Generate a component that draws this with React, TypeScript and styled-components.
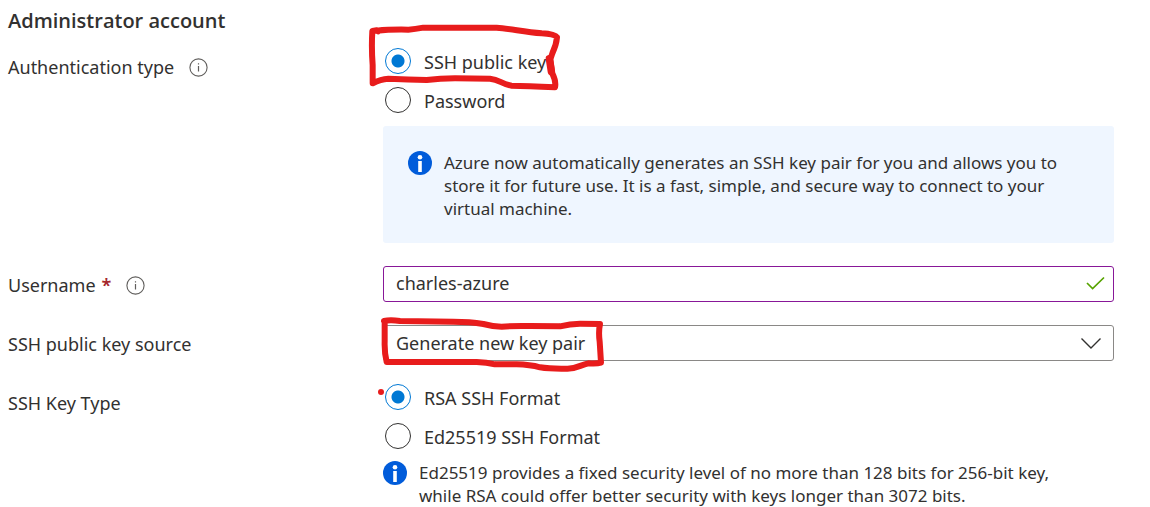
import React from "react";
import styled, { createGlobalStyle } from "styled-components";

const GlobalStyle = createGlobalStyle`
  *, *::before, *::after { box-sizing: border-box; }
  body {
    margin: 0;
    background: #fff;
    color: #323130;
    font-family: "Segoe UI", "Noto Sans", "Open Sans", sans-serif;
    font-size: 18px;
    line-height: 26px;
  }
`;

const Form = styled.form`
  padding: 0 36px 0 8px;
`;

const Heading = styled.h2`
  margin: 0;
  padding: 8px 0 14px;
  font-family: "Segoe UI", "Open Sans", "Noto Sans", sans-serif;
  font-size: 20px;
  line-height: 26px;
  font-weight: 600;
`;

const Rows = styled.div`
  display: grid;
  gap: 23px;
`;

const Row = styled.div`
  display: grid;
  grid-template-columns: 375px minmax(0, 1fr);
`;

const Caption = styled.div`
  display: flex;
  align-items: center;
  height: 36px;
  padding-top: 2px;
`;

const Required = styled.span`
  margin-left: 6px;
  color: #a4262c;
  font-weight: 600;
`;

const InfoButton = styled.button`
  display: flex;
  margin: 0 0 0 15px;
  padding: 0;
  border: 0;
  background: none;
`;

const Control = styled.div`
  position: relative;
  min-width: 0;
`;

const Choices = styled.div`
  display: grid;
  gap: 13px;
`;

const Choice = styled.label`
  display: flex;
  align-items: center;
  gap: 13px;
  height: 26px;
  padding-left: 2px;
`;

const ChoiceText = styled.span`
  padding-top: 2px;
`;

const Radio = styled.input`
  appearance: none;
  width: 26px;
  height: 26px;
  margin: 0;
  border: 1px solid #323130;
  border-radius: 50%;
  background: #fff;

  &:checked {
    border-color: #0078d4;
    background: radial-gradient(circle, #0078d4 6px, #fff 7px);
  }
`;

const Notice = styled.div<{ $filled?: boolean }>`
  display: flex;
  gap: 12px;
  margin-top: ${(p) => (p.$filled ? "13px" : "12px")};
  padding: ${(p) => (p.$filled ? "25px 48px 23px 25px" : "0 48px 0 0")};
  border-radius: 3px;
  background: ${(p) => (p.$filled ? "#eff6ff" : "none")};
  font-size: 17px;
  line-height: 23px;

  svg { flex: none; }
`;

const NoticeText = styled.p`
  margin: 0;
`;

const fieldStyle = `
  display: block;
  width: 100%;
  height: 36px;
  margin: 0;
  border-radius: 3px;
  background: #fff;
  color: #323130;
  font: inherit;
  outline: none;
`;

const TextInput = styled.input`
  ${fieldStyle}
  padding: 0 48px 2px 12px;
  border: 1px solid #881798;
`;

const Select = styled.select`
  ${fieldStyle}
  padding: 0 48px 0 12px;
  appearance: none;
  border: 1px solid #8a8886;
`;

const FieldIcon = styled.svg`
  position: absolute;
  top: 8px;
  right: 8px;
  pointer-events: none;
`;

const Ink = styled.svg<{ $left: number; $top: number }>`
  position: absolute;
  left: ${(p) => p.$left}px;
  top: ${(p) => p.$top}px;
  overflow: visible;
  pointer-events: none;
  fill: none;
  stroke: #e81c1c;
  stroke-width: 18;
  stroke-linecap: round;
  stroke-linejoin: round;
`;

function InfoHint({ label }: { label: string }) {
  return (
    <InfoButton type="button" aria-label={label}>
      <svg width="19" height="19" viewBox="0 0 19 19" fill="none" stroke="#605e5c">
        <circle cx="9.5" cy="9.5" r="8.6" strokeWidth="1.1" />
        <path d="M9.5 8v5.5M9.5 5.2v1.3" strokeWidth="1.2" />
      </svg>
    </InfoButton>
  );
}

function InfoBadge() {
  return (
    <svg width="24" height="24" viewBox="0 0 24 24" aria-hidden="true">
      <circle cx="12" cy="12" r="12" fill="#015cda" />
      <circle cx="12" cy="6.2" r="2.3" fill="#fff" />
      <path d="M10.2 10h3.6v11h-3.6z" fill="#fff" />
    </svg>
  );
}

export default function App() {
  return (
    <>
      <GlobalStyle />
      <Form>
        <Heading>Administrator account</Heading>
        <Rows>
          <Row role="radiogroup" aria-labelledby="auth-type">
            <Caption>
              <span id="auth-type">Authentication type</span>
              <InfoHint label="About authentication type" />
            </Caption>
            <Control>
              <Choices>
                <Choice>
                  <Radio type="radio" name="auth" defaultChecked />
                  <ChoiceText>SSH public key</ChoiceText>
                </Choice>
                <Choice>
                  <Radio type="radio" name="auth" />
                  <ChoiceText>Password</ChoiceText>
                </Choice>
              </Choices>
              <Notice $filled>
                <InfoBadge />
                <NoticeText>
                  Azure now automatically generates an SSH key pair for you and allows you to
                  <br />
                  store it for future use. It is a fast, simple, and secure way to connect to your
                  <br />
                  virtual machine.
                </NoticeText>
              </Notice>
              <Ink $left={-23} $top={-33} width="210" height="105" viewBox="0 0 630 315" aria-hidden="true">
                <path d="M54 49L50 46L37 48Q34 100 38 150L38 205Q62 192 85 191Q145 194 200 195Q240 190 285 190L390 191C420 194 425 208 455 212Q500 213 585 217Q589 200 577 175L571 133L577 115Q589 90 591 67Q584 57 545 55C490 50 450 41 410 38L190 38Q165 43 145 44Q90 43 50 47" />
                <path d="M568 131L574 170" strokeWidth="22" />
              </Ink>
            </Control>
          </Row>

          <Row>
            <Caption>
              <label htmlFor="username">Username</label>
              <Required>*</Required>
              <InfoHint label="About username" />
            </Caption>
            <Control>
              <TextInput id="username" type="text" defaultValue="charles-azure" required spellCheck={false} />
              <FieldIcon width="20" height="20" viewBox="0 0 20 20" fill="none" stroke="#57a300" strokeWidth="1.7" aria-hidden="true">
                <path d="M1 9L6.600 14.500L18 3.500" />
              </FieldIcon>
            </Control>
          </Row>

          <Row>
            <Caption>
              <label htmlFor="key-source">SSH public key source</label>
            </Caption>
            <Control>
              <Select id="key-source">
                <option>Generate new key pair</option>
              </Select>
              <FieldIcon width="30" height="20" viewBox="0 0 30 20" fill="none" stroke="#323130" strokeWidth="1.4" aria-hidden="true">
                <path d="M5.500 5.500L15 15L24.500 5.500" />
              </FieldIcon>
              <Ink $left={-13} $top={-70} width="250" height="125" viewBox="0 0 750 375" aria-hidden="true">
                <path d="M42 198Q60 194 90 198L250 200Q300 200 340 207Q370 215 395 215Q430 212 480 213L570 214Q600 206 630 206L690 207Q685 230 689 260L693 323Q680 327 655 325C630 330 620 342 590 341Q540 342 510 337Q480 329 440 328L375 328Q350 322 320 321L50 321Q43 295 44 260L44 205" />
              </Ink>
            </Control>
          </Row>

          <Row role="radiogroup" aria-labelledby="key-type">
            <Caption>
              <span id="key-type">SSH Key Type</span>
            </Caption>
            <Control>
              <Choices>
                <Choice>
                  <Radio type="radio" name="key-type" defaultChecked />
                  <ChoiceText>RSA SSH Format</ChoiceText>
                </Choice>
                <Choice>
                  <Radio type="radio" name="key-type" />
                  <ChoiceText>Ed25519 SSH Format</ChoiceText>
                </Choice>
              </Choices>
              <Notice>
                <InfoBadge />
                <NoticeText>
                  Ed25519 provides a fixed security level of no more than 128 bits for 256-bit key,
                  <br />
                  while RSA could offer better security with keys longer than 3072 bits.
                </NoticeText>
              </Notice>
              <Ink $left={-5} $top={5} width="6" height="6" viewBox="0 0 18 18" aria-hidden="true">
                <circle cx="9" cy="9" r="9" fill="#e81c1c" stroke="none" />
              </Ink>
            </Control>
          </Row>
        </Rows>
      </Form>
    </>
  );
}
